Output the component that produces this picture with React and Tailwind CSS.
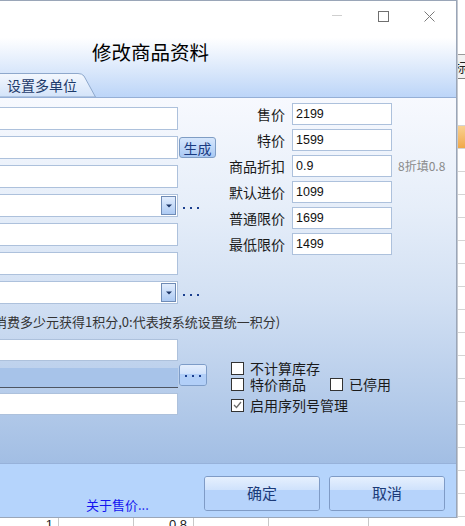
import React from "react";

const cjk = "font-['Noto_Sans_CJK_SC','Liberation_Sans',sans-serif]";
const num = "font-['Liberation_Sans','Noto_Sans_CJK_SC',sans-serif]";

function Dots({ className = "" }) {
  return (
    <div className={"flex items-center gap-[5px] " + className}>
      <span className="block w-[2px] h-[2px] bg-[#1b3f8f]" />
      <span className="block w-[2px] h-[2px] bg-[#1b3f8f]" />
      <span className="block w-[2px] h-[2px] bg-[#1b3f8f]" />
    </div>
  );
}

function Input({ className = "", children }) {
  return (
    <div className={"bg-white border border-[#adc1dc] flex items-center " + className}>{children}</div>
  );
}

function Select() {
  return (
    <Input className="w-[198px] h-[23px] justify-end pr-[1px]">
      <div className="w-[15px] h-[19px] border border-[#6f8bb5] bg-gradient-to-b from-[#e2edfd] to-[#adcaf3] flex items-center justify-center">
        <svg width="6" height="4" viewBox="0 0 6 4"><path d="M0 0.5 H6 L3 3.5 Z" fill="#1c3566" /></svg>
      </div>
    </Input>
  );
}

function LeftRow({ children, extra }) {
  return (
    <div className="flex items-center h-[23px]">
      {children}
      {extra}
    </div>
  );
}

function PriceRow({ label, value, hint }) {
  return (
    <div className="flex items-center h-[22px]">
      <div className={"w-[56px] text-right text-[14px] leading-none text-[#1a1a1a] " + cjk}>{label}</div>
      <Input className="ml-[7px] w-[100px] h-[22px] pl-[3px]">
        <span className={"text-[12.5px] leading-none text-[#111] " + num}>{value}</span>
      </Input>
      {hint && <span className={"ml-[6px] text-[12px] text-[#8a8a8a] leading-none " + cjk}>{hint}</span>}
    </div>
  );
}

function Check({ label, checked }) {
  return (
    <div className="flex items-center h-[14px]">
      <div className="w-[13px] h-[13px] border border-[#333] bg-white flex items-center justify-center">
        {checked && (
          <svg width="9" height="8" viewBox="0 0 9 8"><path d="M1 4 L3.5 6.5 L8 1" stroke="#6b6b6b" strokeWidth="1.3" fill="none" /></svg>
        )}
      </div>
      <span className={"ml-[6px] text-[14px] leading-[14px] text-[#1a1a1a] whitespace-nowrap " + cjk}>{label}</span>
    </div>
  );
}

function BigButton({ label }) {
  return (
    <div className="w-[116px] h-[35px] rounded-[3px] border border-[#7f9bc6] overflow-hidden flex flex-col relative">
      <div className="h-[13px] bg-gradient-to-b from-[#e6f0fe] to-[#cfe2fc]" />
      <div className="flex-1 bg-[#b6d3fb]" />
      <div className={"absolute inset-0 flex items-center justify-center text-[15px] text-[#1b3a78] " + cjk}>{label}</div>
    </div>
  );
}

export default function App() {
  const stripCells = [];
  for (let i = 0; i < 16; i++) stripCells.push(i);
  return (
    <div className="w-[465px] h-[526px] overflow-hidden bg-white flex flex-col">
      <div className="flex h-[518px] shrink-0">
        {/* window */}
        <div className="w-[457px] h-[518px] shrink-0 flex flex-col border-t border-r border-b border-[#9aa6b8] bg-white">
          {/* title bar */}
          <div className="h-[96px] flex flex-col bg-[linear-gradient(to_bottom,#ffffff_0%,#ffffff_38%,#bcd5f8_100%)]">
            <div className="h-[30px] flex items-start justify-end">
              <div className="w-[46px] h-[30px] flex items-center justify-center">
                <div className="w-[10px] h-px bg-[#cfcfcf] mt-[-1px]" />
              </div>
              <div className="w-[46px] h-[30px] flex items-center justify-center">
                <div className="w-[11px] h-[11px] border border-[#6f6f6f]" />
              </div>
              <div className="w-[46px] h-[30px] flex items-center justify-center mr-[4px]">
                <svg width="11" height="11" viewBox="0 0 11 11"><path d="M0.5 0.5 L10.5 10.5 M10.5 0.5 L0.5 10.5" stroke="#7a7a7a" strokeWidth="1" /></svg>
              </div>
            </div>
            <div className={"pl-[92px] mt-[9px] h-[24px] text-[19.5px] leading-[24px] text-black " + cjk}>修改商品资料</div>
            <div className="mt-[9px] relative w-[96px] h-[24px]">
              <svg className="absolute inset-0" width="96" height="24" viewBox="0 0 96 24">
                <defs>
                  <linearGradient id="tabg" x1="0" y1="0" x2="0" y2="1">
                    <stop offset="0" stopColor="#f4f8fe" />
                    <stop offset="1" stopColor="#d3e3f9" />
                  </linearGradient>
                </defs>
                <path d="M-1 24 L-1 0.5 L78 0.5 Q82 0.5 84 3 L95.5 24 Z" fill="url(#tabg)" stroke="#8ea8cc" strokeWidth="1" />
              </svg>
              <div className={"absolute left-[7px] top-[3px] text-[14px] leading-[18px] text-[#1d3a6a] " + cjk}>设置多单位</div>
            </div>
          </div>
          {/* content */}
          <div className="flex-1 flex flex-col border-t border-[#95afd6] bg-[linear-gradient(to_bottom,#f7f9fe_0%,#e6eef9_30%,#d2e0f3_55%,#a2bee4_100%)] overflow-hidden">
            <div className="flex">
              <div className="w-[240px] -ml-[20px] pt-[9px] flex flex-col gap-[6px]">
                <LeftRow><Input className="w-[198px] h-[23px]" /></LeftRow>
                <LeftRow extra={
                  <div className={"ml-[1px] w-[37px] h-[21px] rounded-[3px] border border-[#7f9dc4] bg-gradient-to-b from-[#d6e6fc] to-[#a9c9f4] flex items-center justify-center text-[14px] leading-none text-[#1a3a80] " + cjk}>生成</div>
                }><Input className="w-[198px] h-[23px]" /></LeftRow>
                <LeftRow><Input className="w-[198px] h-[23px]" /></LeftRow>
                <LeftRow extra={<Dots className="ml-[5px] mt-[4px]" />}><Select /></LeftRow>
                <LeftRow><Input className="w-[198px] h-[23px]" /></LeftRow>
                <LeftRow><Input className="w-[198px] h-[23px]" /></LeftRow>
                <LeftRow extra={<Dots className="ml-[5px] mt-[4px]" />}><Select /></LeftRow>
              </div>
              <div className="ml-[9px] pt-[5px] flex flex-col gap-[4px]">
                <PriceRow label="售价" value="2199" />
                <PriceRow label="特价" value="1599" />
                <PriceRow label="商品折扣" value="0.9" hint="8折填0.8" />
                <PriceRow label="默认进价" value="1099" />
                <PriceRow label="普通限价" value="1699" />
                <PriceRow label="最低限价" value="1499" />
              </div>
            </div>
            <div className={"mt-[9px] -ml-[6px] h-[18px] leading-[18px] text-[13px] text-[#333] whitespace-nowrap " + cjk}>
              消费多少元获得1积分,0:代表按系统设置统一积分)
            </div>
            <div className="mt-[8px] flex">
              <div className="w-[240px] -ml-[20px] flex flex-col">
                <Input className="w-[198px] h-[22px]" />
                <div className="mt-[3px] flex items-start h-[24px]">
                  <div className="mt-[4px] w-[198px] h-[20px] bg-[#a7c3e9] border-b border-[#4e5562]" />
                  <div className="ml-[1px] w-[28px] h-[22px] rounded-[3px] border border-[#7d9cc8] overflow-hidden relative flex flex-col">
                    <div className="h-[9px] bg-gradient-to-b from-[#e4eefd] to-[#cfe1fb]" />
                    <div className="flex-1 bg-[#b2cff8]" />
                    <Dots className="absolute inset-0 justify-center mt-[1px]" />
                  </div>
                </div>
                <Input className="mt-[5px] w-[198px] h-[22px]" />
              </div>
              <div className="ml-[11px] pt-[22px] flex flex-col">
                <Check label="不计算库存" />
                <div className="mt-[2px] flex items-center">
                  <div className="w-[99px]"><Check label="特价商品" /></div>
                  <Check label="已停用" />
                </div>
                <div className="mt-[7px]"><Check label="启用序列号管理" checked /></div>
              </div>
            </div>
          </div>
          {/* footer */}
          <div className="h-[54px] border-t border-[#97b2da] bg-[#b5d4fc] flex pt-[12px] pr-[11px]">
            <div className="flex-1 pl-[86px] pt-[22px]">
              <div className={"text-[13px] leading-[14px] text-[#1414f0] " + cjk}>关于售价...</div>
            </div>
            <div className="flex gap-[9px]">
              <BigButton label="确定" />
              <BigButton label="取消" />
            </div>
          </div>
        </div>
        {/* background strip right */}
        <div className="w-[8px] h-[518px] overflow-hidden flex flex-col bg-white border-l border-[#c4c8d0]">
          <div className="h-[55px] shrink-0 border-b border-[#9a9a9a]" />
          <div className={"h-[24px] shrink-0 border-b border-[#808080] bg-[#f2f2f2] text-[13px] leading-[24px] text-[#222] overflow-hidden whitespace-nowrap " + cjk}><span className="-ml-[4px] inline-block">标</span></div>
          <div className="h-[47px] shrink-0 border-b border-[#d4d4d4]" />
          <div className="h-[23px] shrink-0 bg-gradient-to-b from-[#f9d190] to-[#f0a848] border-b border-[#d4d4d4]" />
          {stripCells.map((i) => (
            <div key={i} className="h-[23px] shrink-0 border-b border-[#d4d4d4]" />
          ))}
        </div>
      </div>
      {/* background strip bottom */}
      <div className="h-[8px] shrink-0 flex bg-white">
        <div className={"w-[59px] border-r border-[#c8c8c8] text-right pr-[5px] text-[13px] leading-[14px] text-[#222] " + num}>1</div>
        <div className="w-[75px] border-r border-[#c8c8c8]" />
        <div className={"w-[60px] border-r border-[#c8c8c8] text-right pr-[6px] text-[13px] leading-[14px] text-[#222] " + num}>0.8</div>
        <div className="w-[75px] border-r border-[#c8c8c8]" />
        <div className="w-[100px] border-r border-[#c8c8c8]" />
      </div>
    </div>
  );
}
